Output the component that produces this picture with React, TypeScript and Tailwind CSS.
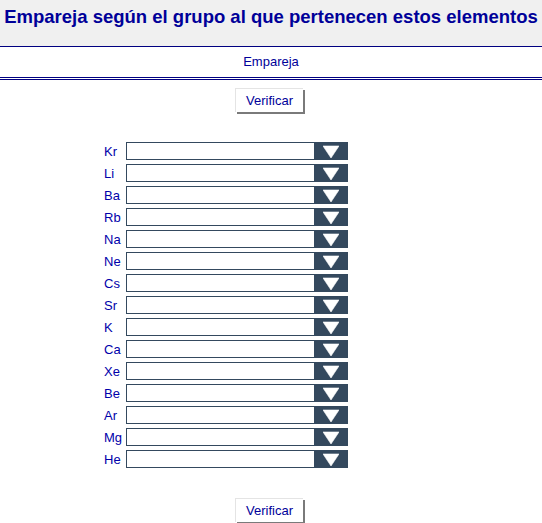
import React from 'react';

const elements = ['Kr', 'Li', 'Ba', 'Rb', 'Na', 'Ne', 'Cs', 'Sr', 'K', 'Ca', 'Xe', 'Be', 'Ar', 'Mg', 'He'];

const VerifyButton: React.FC = () => (
    <div className="flex justify-center pr-[4px]">
        <button className="w-[68px] h-[24px] bg-white text-[13px] text-[#000099] border-t border-l border-[#e4e4e4] shadow-[2px_2px_0_#7a7a7a]">
            Verificar
        </button>
    </div>
);

const Row: React.FC<{ label: string }> = ({ label }) => (
    <div className="flex items-center h-[18px]">
        <span className="w-[22px] text-[13px] text-[#0000aa] leading-none">{label}</span>
        <div className="relative w-[222px] h-[18px]">
            <select className="appearance-none w-full h-full bg-white border border-[#34495e] outline-none" defaultValue="">
                <option value=""></option>
                <option>Gases nobles</option>
                <option>Alcalinos</option>
                <option>Alcalinotérreos</option>
            </select>
            {/* arrow box */}
            <div className="absolute right-0 top-0 w-[34px] h-[18px] bg-[#34495e] flex items-center justify-center pointer-events-none">
                <svg width="16" height="13" viewBox="0 0 16 13">
                    <polygon points="0,1 16,1 8,13" fill="#ffffff" stroke="#ffffff" strokeWidth="0.6" strokeLinejoin="round" />
                </svg>
            </div>
        </div>
    </div>
);

export default function App() {
    return (
        <div className="w-full min-h-[523px] bg-white font-['Liberation_Sans',Arial,sans-serif]">
            {/* Title */}
            <div className="h-[47px] bg-[#f0f0f0] border-b border-[#000080] flex justify-center pt-[3px]">
                <h1 className="text-[18.5px] font-bold text-[#000099] leading-[28px] whitespace-nowrap">
                    Empareja según el grupo al que pertenecen estos elementos
                </h1>
            </div>
            <div className="h-[33px] border-b-[3px] border-double border-[#000080] flex items-center justify-center text-[13px] text-[#000099]">
                Empareja
            </div>

            <div className="pt-[8px]">
                <VerifyButton />
            </div>

            <div className="pt-[30px] pl-[104px] flex flex-col gap-[4px]">
                {elements.map(el => (
                    <Row key={el} label={el} />
                ))}
            </div>

            <div className="pt-[30px]">
                <VerifyButton />
            </div>
        </div>
    );
}
